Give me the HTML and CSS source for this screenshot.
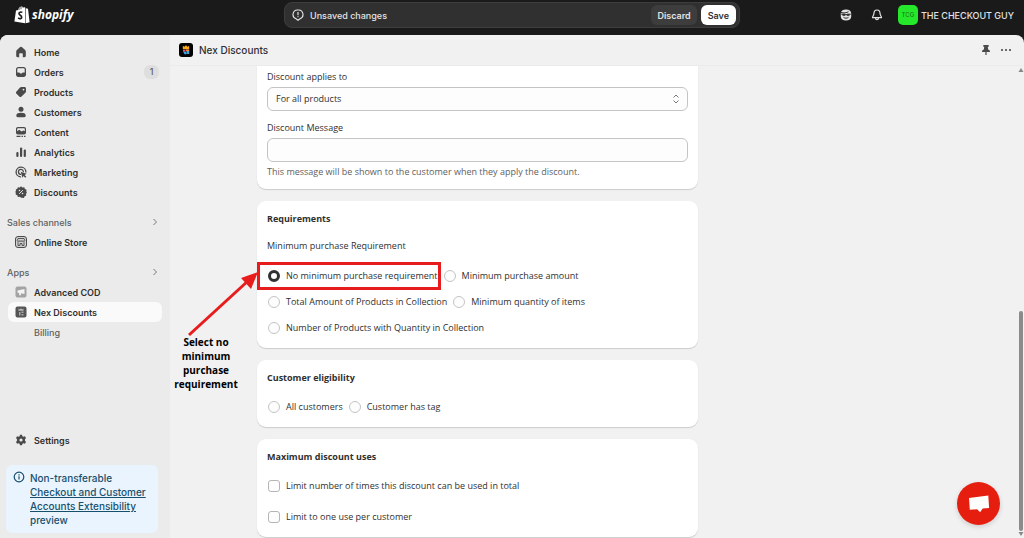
FILE: index.html
```html
<!DOCTYPE html>
<html lang="en">
  <head>
    <meta charset="UTF-8" />
    <meta name="viewport" content="width=device-width, initial-scale=1.0" />
    <title>Nex Discounts</title>
    <link rel="stylesheet" href="styles.css">
  </head>
  <body>
    <!-- Top bar -->
    <header class="top-bar">
      <a class="logo" href="#" aria-label="Shopify">
        <svg width="16" height="18" viewBox="0 0 16 18">
          <path d="M2 4.6 4.2 4C4.6 2 6 .5 7.5.5c.8 0 1.3.5 1.6 1.1L11 1.3l.1 15.9L.4 15.4z" fill="#fff" />
          <path d="m11.6 1.6.9 1 1.5.2 1.6 13.5-4 1z" fill="#fff" />
          <path d="M5.2 3.8C5.6 2.3 6.5 1.4 7.4 1.3M7 3.3c.1-1 .6-1.8 1.3-1.9" fill="none" stroke="#1a1a1a" stroke-width=".6" />
          <path d="M8.4 6.4C6.8 5.6 5 6.1 5 7.6c0 1.7 2.7 1.7 2.7 3.6 0 1.6-1.7 1.9-3.6.8" fill="none" stroke="#1a1a1a" stroke-width="1.6" />
        </svg>
        <span>shopify</span>
      </a>
      <div class="save-bar">
        <svg width="12" height="12" viewBox="0 0 12 12" fill="none" stroke="#e3e3e3">
          <path d="M6 1a4.5 4.5 0 0 1 2 8.700L6 11.300 4 9.700A4.500 4.500 0 0 1 6 1z" stroke-width="1.1" />
          <path d="M6 3v3.200M6 7.200v1.100" stroke-width="1.2" />
        </svg>
        <span class="save-text">Unsaved changes</span>
        <button class="btn discard">Discard</button>
        <button class="btn save">Save</button>
      </div>
      <div class="account">
        <button class="icon-btn" aria-label="Sidekick">
          <svg width="12" height="12" viewBox="0 0 12 12">
            <path d="M6 .5C9.200.5 11.200 2 11.200 4.500v3C11.200 10 9.200 11.500 6 11.500S.8 10 .8 7.500v-3C.8 2 2.800.5 6 .5z" fill="#e3e3e3" />
            <path d="M1 3.400c2.500 1.200 6 .2 7.500-.7M1.200 5.200h3.300l1.500.7 1.500-.7h3.300M3.500 8.300c1.500 1.200 3.500 1.200 5 0" fill="none" stroke="#1a1a1a" stroke-width=".9" />
            <path d="M2.500 5.300h2.700v1.500H2.500zM6.800 5.300h2.700v1.500H6.800z" fill="#1a1a1a" />
          </svg>
        </button>
        <button class="icon-btn" aria-label="Notifications">
          <svg width="12" height="12" viewBox="0 0 12 12" fill="none" stroke="#e3e3e3" stroke-width="1.2" stroke-linejoin="round">
            <path d="M6 1C4 1 3 2.500 3 4.200 3 6.300 1.500 7 1.500 8.700h9C10.500 7 9 6.300 9 4.200 9 2.500 8 1 6 1zM4.500 9c0 2.200 3 2.200 3 0" />
          </svg>
        </button>
        <button class="user">
          <span class="avatar">TCG</span>
          <span>THE CHECKOUT GUY</span>
        </button>
      </div>
    </header>

    <div class="frame">
      <!-- Side navigation -->
      <nav class="sidebar">
        <ul class="menu">
          <li>
            <a href="#">
              <svg width="12" height="12" viewBox="0 0 12 12"><path d="M6 .8c.5 0 .8.2 1.100.5l3 2.800c.5.500.7.900.7 1.600v4.100c0 .8-.5 1.400-1.300 1.400H7.800V8.300c0-.6-.4-1-1-1H5.200c-.6 0-1 .4-1 1v2.900H2.500c-.8 0-1.300-.6-1.300-1.400V5.700c0-.7.2-1.100.7-1.600l3-2.800C5.200 1 5.500.8 6 .8z" /></svg>
              Home
            </a>
          </li>
          <li>
            <a href="#">
              <svg width="12" height="12" viewBox="0 0 12 12"><path fill-rule="evenodd" d="M3.500 1h5C10.200 1 11 2 11 3.500v5c0 1.600-.9 2.500-2.500 2.500h-5C1.900 11 1 10.100 1 8.500v-5C1 2 1.900 1 3.500 1zm0 1.300c-.8 0-1.200.4-1.200 1.200v2.900h1.900c.5 0 .7 1.200 1.800 1.200s1.300-1.200 1.800-1.200h1.900V3.500c0-.8-.4-1.200-1.200-1.200z" /></svg>
              Orders
              <span class="count">1</span>
            </a>
          </li>
          <li>
            <a href="#">
              <svg width="12" height="12" viewBox="0 0 12 12"><path fill-rule="evenodd" d="M6.300 1h3C10.500 1 11 1.500 11 2.700v2.500c0 .6-.1 1-.6 1.500l-3.900 3.800c-.7.7-1.500.7-2.200 0L1.500 7.700c-.7-.7-.7-1.500 0-2.200L5 1.600C5.400 1.200 5.800 1 6.300 1zm2.200 1.700a.9.900 0 1 0 0 1.800.9.9 0 0 0 0-1.800z" /></svg>
              Products
            </a>
          </li>
          <li>
            <a href="#">
              <svg width="12" height="12" viewBox="0 0 12 12"><circle cx="6" cy="3.300" r="2.500" /><path d="M1.300 9.500C1.300 7.500 3.300 6.800 6 6.800s4.700.7 4.700 2.700c0 1-.5 1.700-1.500 1.700H2.800c-1 0-1.500-.7-1.500-1.700z" /></svg>
              Customers
            </a>
          </li>
          <li>
            <a href="#">
              <svg width="12" height="12" viewBox="0 0 12 12"><path fill-rule="evenodd" d="M3 1h6c1.300 0 2 .7 2 2v3.500c0 1.300-.7 2-2 2H3c-1.300 0-2-.7-2-2V3c0-1.300.7-2 2-2zm-.8 4.300 2-1.500 2.400 1.700 1.800-1 1.400.8V3c0-.5-.3-.8-.8-.8H3c-.5 0-.8.3-.8.8z" /><path d="M1.500 9.700h4V11h-4zM6.500 9.700h1.500V11H6.500zM9 9.700h1.500V11H9z" /></svg>
              Content
            </a>
          </li>
          <li>
            <a href="#">
              <svg width="12" height="12" viewBox="0 0 12 12"><rect x="1.300" y="6" width="2.200" height="5" rx="1" /><rect x="5" y="1.500" width="2.200" height="9.500" rx="1" /><rect x="8.700" y="3.500" width="2.200" height="7.500" rx="1" /></svg>
              Analytics
            </a>
          </li>
          <li>
            <a href="#">
              <svg width="12" height="12" viewBox="0 0 12 12"><path d="M5.500 10.900A4.900 4.900 0 1 1 10.900 6M5.500 8.400A2.500 2.500 0 1 1 8.400 5.500" fill="none" stroke="#4a4a4a" stroke-width="1.3" stroke-linecap="round" /><path d="m5.700 5.700 5.900 2-2 1.200 1.700 1.800-1 1-1.800-1.700-1.100 1.700z" /></svg>
              Marketing
            </a>
          </li>
          <li>
            <a href="#">
              <svg width="12" height="12" viewBox="0 0 12 12"><path d="m6 .3 1.400 1.200 1.900-.3.600 1.700 1.700.8-.3 1.900.6 1-.9 1.500.2 1.500-1.700.8-.6 1.600-1.700-.3L6 11.700l-1.200-1-1.900.2-.6-1.600-1.700-.8.3-1.800L.1 6l.9-1.100-.2-1.400 1.500-.7.6-1.600 1.900.3z" /><path d="m4.200 7.800 3.600-3.600" stroke="#ebebeb" /><circle cx="4.500" cy="4.500" r=".8" fill="#ebebeb" /><circle cx="7.500" cy="7.500" r=".8" fill="#ebebeb" /></svg>
              Discounts
            </a>
          </li>
        </ul>

        <button class="section">
          Sales channels
          <svg width="8" height="8" viewBox="0 0 8 8"><path d="m2.500 1 3 3-3 3" /></svg>
        </button>
        <ul class="menu">
          <li>
            <a href="#">
              <svg width="12" height="12" viewBox="0 0 12 12"><rect x=".5" y=".5" width="11" height="11" rx="2.500" fill="#d2d2d2" stroke="#4a4a4a" /><path d="M3 2.500h6l.8 2c0 1.300-1.800 1.300-1.900.1 0 1.200-1.900 1.200-1.900 0 0 1.200-1.900 1.200-1.900 0-.1 1.200-1.900 1.200-1.900-.1zM3 6.200V9.500h2V7.500h2v2h2V6.200" fill="none" stroke="#4a4a4a" stroke-width=".9" /></svg>
              Online Store
            </a>
          </li>
        </ul>

        <button class="section">
          Apps
          <svg width="8" height="8" viewBox="0 0 8 8"><path d="m2.500 1 3 3-3 3" /></svg>
        </button>
        <ul class="menu">
          <li>
            <a href="#">
              <svg width="12" height="12" viewBox="0 0 12 12"><rect x=".5" y=".5" width="11" height="11" rx="2" fill="#a3a3a3" /><path d="M2.500 4.500 9.500 3v5L6.300 7.300 5.500 9.500 4 9l.3-2-1.800-.3z" fill="#f3f3f3" /></svg>
              Advanced COD
            </a>
          </li>
          <li>
            <a class="active" href="#">
              <svg width="12" height="12" viewBox="0 0 12 12"><rect x=".5" y=".5" width="11" height="11" rx="2" fill="#555" /><path d="m3.500 2.500 1.300 1L6 2.200l1.200 1.300 1.300-1v2.200h-5z" fill="#bbb" /><path d="M4 6h1.500v3.500H4zM6.500 5.500H8.500V7h-2zM6.500 8h2v1.500h-2z" fill="#aaa" /></svg>
              Nex Discounts
            </a>
          </li>
          <li><a class="sub" href="#">Billing</a></li>
        </ul>

        <div class="sidebar-end">
          <ul class="menu">
            <li>
              <a href="#">
                <svg width="12" height="12" viewBox="0 0 12 12"><path fill-rule="evenodd" d="M5 .7h2l.4 1.500 1 .5 1.500-.5 1.100 1.900-1 1.100v1.600l1 1.100-1.100 1.900-1.500-.5-1 .5L7 11.300H5l-.4-1.500-1-.5-1.500.5L1 7.900l1-1.100V5.200L1 4.100l1.100-1.900 1.500.5 1-.5zM6 4.400a1.600 1.600 0 1 0 0 3.200 1.600 1.600 0 0 0 0-3.200z" /></svg>
                Settings
              </a>
            </li>
          </ul>
          <div class="notice">
            <svg width="12" height="12" viewBox="0 0 12 12" fill="none" stroke="#17506b"><circle cx="6" cy="6" r="4.800" stroke-width="1.2" /><path d="M6 5.300v3.200M6 3.200v1.200" stroke-width="1.2" /></svg>
            <p>Non-transferable <a href="#">Checkout and Customer Accounts Extensibility</a> preview</p>
          </div>
        </div>
      </nav>

      <!-- App page -->
      <main class="app">
        <div class="app-header">
          <svg width="14" height="14" viewBox="0 0 14 14"><rect width="14" height="14" rx="3" fill="#000" /><path d="m3.800 2.800 1.700 1L7 2.300l1.500 1.500 1.700-1v3.400H3.800z" fill="#f5a81c" /><path d="M4 6.800h2.500v2H4z" fill="#e64a8b" /><path d="M7 6.500h3.200V8H7z" fill="#f08a2c" /><path d="M4.200 8.800H7l.5 2.500H5.500z" fill="#37a7e8" /><path d="M7.500 8h2.700v3H7.500z" fill="#3fa7d8" /></svg>
          <h1>Nex Discounts</h1>
          <button class="icon-btn" aria-label="Pin app">
            <svg width="12" height="12" viewBox="0 0 12 12" fill="#4a4a4a"><path d="M3.300 1h5.400v1.700h-.9l.3 2.800c1.200.4 1.900 1.100 1.900 2.500H6.600v3H5.400V8H2c0-1.400.7-2.100 1.900-2.500l.3-2.800h-.9z" /></svg>
          </button>
          <button class="icon-btn" aria-label="More actions">
            <svg width="12" height="12" viewBox="0 0 12 12" fill="#4a4a4a"><circle cx="2" cy="6" r="1.100" /><circle cx="6" cy="6" r="1.100" /><circle cx="10" cy="6" r="1.100" /></svg>
          </button>
        </div>

        <div class="scroll-area">
          <form class="page">
            <div class="cards">
              <section class="card card-top">
                <div class="field">
                  <label for="applies">Discount applies to</label>
                  <div class="select-wrap">
                    <select id="applies">
                      <option>For all products</option>
                    </select>
                    <svg width="8" height="12" viewBox="0 0 8 12"><path d="M1.500 4.500 4 2l2.500 2.500M1.500 7.500 4 10l2.500-2.500" /></svg>
                  </div>
                </div>
                <div class="field">
                  <label for="message">Discount Message</label>
                  <input class="text-input" id="message" type="text" />
                  <p class="help">This message will be shown to the customer when they apply the discount.</p>
                </div>
              </section>

              <section class="card">
                <h2>Requirements</h2>
                <p class="subtitle">Minimum purchase Requirement</p>
                <div class="choices">
                  <label><input type="radio" name="requirement" checked />No minimum purchase requirement</label>
                  <label><input type="radio" name="requirement" />Minimum purchase amount</label>
                  <label><input type="radio" name="requirement" />Total Amount of Products in Collection</label>
                  <label><input type="radio" name="requirement" />Minimum quantity of items</label>
                  <label><input type="radio" name="requirement" />Number of Products with Quantity in Collection</label>
                </div>
                <div class="highlight"></div>
                <div class="callout">
                  <svg width="72" height="66" viewBox="0 0 72 66"><path d="M2 64 62 9" stroke="#e81c1c" stroke-width="3" /><path d="m71 1-7 17-10-11z" fill="#e81c1c" /></svg>
                  <p>Select no minimum purchase requirement</p>
                </div>
              </section>

              <section class="card">
                <h2>Customer eligibility</h2>
                <div class="choices">
                  <label><input type="radio" name="eligibility" />All customers</label>
                  <label><input type="radio" name="eligibility" />Customer has tag</label>
                </div>
              </section>

              <section class="card">
                <h2>Maximum discount uses</h2>
                <div class="choices stacked">
                  <label><input type="checkbox" />Limit number of times this discount can be used in total</label>
                  <label><input type="checkbox" />Limit to one use per customer</label>
                </div>
              </section>
            </div>
          </form>

          <div class="scrollbar">
            <svg width="6" height="6" viewBox="0 0 6 6"><path d="m3 1 2.500 4h-5z" /></svg>
            <div class="track"><div class="thumb"></div></div>
            <svg width="6" height="6" viewBox="0 0 6 6"><path d="M3 5 .5 1h5z" /></svg>
          </div>
        </div>
      </main>
    </div>

    <button class="chat" aria-label="Open chat">
      <svg width="22" height="20" viewBox="0 0 22 20"><path d="M1 4 20.300 1.500l.8 12.500-6.400.4-2.600 3.900-3-3.100-7.300.5z" fill="#fff" /></svg>
    </button>
  </body>
</html>
```
FILE: styles.css
```css
* {
  box-sizing: border-box;
  margin: 0;
  padding: 0;
}

body {
  height: 100vh;
  display: flex;
  flex-direction: column;
  overflow: hidden;
  background: #1a1a1a;
  color: #303030;
  font-family: Inter, sans-serif;
  font-size: 9px;
}

button {
  border: none;
  background: none;
  font: inherit;
  cursor: pointer;
}

svg {
  display: block;
  flex: none;
}

ul {
  list-style: none;
}

/* Top bar */
.top-bar {
  height: 35px;
  flex: none;
  display: grid;
  grid-template-columns: 1fr 456px 1fr;
  align-items: center;
  padding: 0 10px 5px;
}

.logo {
  display: flex;
  align-items: center;
  gap: 2px;
  padding-left: 4px;
  color: #fff;
  font: italic bold 12px/18px "Open Sans", sans-serif;
  text-decoration: none;
}

.save-bar {
  height: 26px;
  display: flex;
  align-items: center;
  gap: 4px;
  padding: 0 3px 0 7px;
  border: 1px solid #3d3d3d;
  border-radius: 8px;
  background: #303030;
  color: #e3e3e3;
  font-weight: 500;
}

.save-text {
  flex: 1;
  padding-left: 2px;
}

.btn {
  height: 20px;
  padding: 0 6px;
  border-radius: 6px;
  font-weight: 600;
}

.discard {
  background: #3d3d3d;
  color: #e3e3e3;
}

.save {
  padding: 0 7px;
  background: #fff;
  color: #303030;
}

.account {
  display: flex;
  align-items: center;
  justify-content: flex-end;
  gap: 19px;
}

.user {
  display: flex;
  align-items: center;
  gap: 3px;
  margin-left: -4px;
  color: #e3e3e3;
  font-weight: 500;
  white-space: nowrap;
}

.avatar {
  width: 20px;
  height: 20px;
  border-radius: 5px;
  background: #25e82b;
  color: #1b7a1e;
  font-size: 6px;
  line-height: 20px;
  text-align: center;
}

.frame {
  flex: 1;
  min-height: 0;
  display: flex;
  border-radius: 8px 8px 0 0;
  background: #f1f1f1;
  overflow: hidden;
}

/* Side navigation */
.sidebar {
  width: 170px;
  flex: none;
  display: flex;
  flex-direction: column;
  padding: 7px 8px 5px;
  background: #ebebeb;
}

.menu a {
  height: 20px;
  display: flex;
  align-items: center;
  gap: 7px;
  padding: 0 3px 0 7px;
  border-radius: 6px;
  color: #303030;
  fill: #4a4a4a;
  font-weight: 600;
  text-decoration: none;
}

.menu .active {
  background: #fafafa;
}

.menu .sub {
  padding-left: 26px;
  color: #616161;
  font-weight: 500;
}

.count {
  min-width: 15px;
  margin-left: auto;
  border-radius: 6px;
  background: #dedede;
  color: #616161;
  font-weight: 500;
  line-height: 14px;
  text-align: center;
}

.section {
  height: 20px;
  display: flex;
  align-items: center;
  justify-content: space-between;
  margin-top: 10px;
  margin-left: -1px;
  padding-right: 3px;
  color: #616161;
  font-weight: 500;
}

.section svg,
.select-wrap svg {
  fill: none;
  stroke: #777;
}

.sidebar-end {
  margin-top: auto;
}

.notice {
  display: flex;
  gap: 5px;
  margin: 15px 4px 0 -2px;
  padding: 6px 7px;
  border-radius: 6px;
  background: #eaf4ff;
  color: #17506b;
  font-size: 10px;
  font-weight: 500;
  line-height: 14px;
}

.notice a {
  color: inherit;
}

/* App page */
.app {
  flex: 1;
  min-width: 0;
  display: flex;
  flex-direction: column;
}

.app-header {
  height: 31px;
  flex: none;
  display: flex;
  align-items: center;
  gap: 8px;
  padding: 0 12px 0 9px;
  border-bottom: 1px solid #ebebeb;
}

.app-header h1 {
  flex: 1;
  margin-left: -2px;
  font-size: 10px;
  font-weight: 500;
}

.scroll-area {
  flex: 1;
  min-height: 0;
  display: flex;
  overflow: hidden;
}

.page {
  flex: 1;
  display: grid;
  grid-template-columns: 2fr 1fr;
  align-items: start;
  gap: 12px;
  padding: 0 87px;
  font-family: "Open Sans", sans-serif;
  line-height: 14px;
}

.cards {
  display: flex;
  flex-direction: column;
  gap: 12px;
}

.card {
  position: relative;
  padding: 11px 10px 13px;
  border-radius: 9px;
  background: #fff;
  box-shadow: 0 1px 1px #ccc;
}

.card-top {
  display: flex;
  flex-direction: column;
  gap: 10px;
  padding-top: 4px;
  padding-bottom: 10px;
  border-radius: 0 0 9px 9px;
}

.card h2 {
  font-size: 9px;
  font-weight: 700;
  line-height: 14px;
}

.field label {
  display: block;
  margin-bottom: 3px;
}

.select-wrap {
  position: relative;
}

.select-wrap svg {
  position: absolute;
  top: 6px;
  right: 8px;
}

.field select,
.text-input {
  display: block;
  width: 100%;
  height: 24px;
  padding: 0 8px;
  border: 1px solid #c4c4c4;
  border-radius: 6px;
  background: #fdfdfd;
  color: #303030;
  font: inherit;
  appearance: none;
}

.help {
  margin-top: 3px;
  color: #616161;
}

.subtitle {
  margin-top: 13px;
}

.choices {
  display: flex;
  flex-wrap: wrap;
  gap: 12px 5px;
  margin-top: 15px;
}

.subtitle + .choices {
  margin-top: 16px;
}

.choices label {
  display: flex;
  align-items: center;
  gap: 6px;
}

.choices input {
  width: 12px;
  height: 12px;
  margin-left: 1px;
  border: 1px solid #c4c4c4;
  border-radius: 50%;
  background: #fdfdfd;
  appearance: none;
}

.choices input:checked {
  border: 3px solid #303030;
}

.choices input[type="checkbox"] {
  border-color: #b5b5b5;
  border-radius: 3px;
}

.stacked {
  flex-direction: column;
  gap: 17px;
}

/* Callout on the selected option */
.highlight {
  position: absolute;
  top: 61px;
  left: 0;
  width: 184px;
  height: 28px;
  border: 3px solid #e81c1c;
}

.callout {
  position: absolute;
  top: 70px;
  left: -84px;
  width: 66px;
  color: #000;
  font-size: 10px;
  font-weight: 700;
  text-align: center;
}

.callout svg {
  margin-left: 14px;
}

.callout p {
  margin-top: -2px;
}

/* Scrollbar */
.scrollbar {
  width: 6px;
  flex: none;
  display: flex;
  flex-direction: column;
  padding: 1px 0;
  fill: #888;
}

.track {
  flex: 1;
  display: flex;
  flex-direction: column;
  justify-content: flex-end;
  align-items: center;
}

.thumb {
  width: 4px;
  height: 48%;
  border-radius: 2px;
  background: #8b8b8b;
}

.chat {
  position: fixed;
  right: 24px;
  bottom: 13px;
  width: 43px;
  height: 43px;
  display: flex;
  align-items: center;
  justify-content: center;
  border-radius: 50%;
  background: #e61e10;
  box-shadow: 0 2px 5px rgba(0, 0, 0, 0.15);
}
```
